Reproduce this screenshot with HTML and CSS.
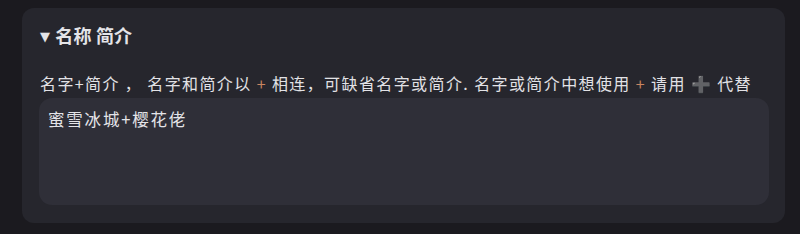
FILE: index.html
```html
<!DOCTYPE html>
<html lang="zh">
  <head>
    <meta charset="UTF-8" />
    <title>名称 简介</title>
    <link rel="stylesheet" href="styles.css">
  </head>
  <body>
    <details class="panel" open>
      <summary class="panel-title">名称 简介</summary>
      <p class="hint">
        名字+简介 ， 名字和简介以 <span class="plus">+</span> 相连，可缺省名字或简介. 名字或简介中想使用 <span class="plus">+</span> 请用 <span class="heavy-plus">➕</span> 代替
      </p>
      <textarea class="name-input" rows="4">蜜雪冰城+樱花佬</textarea>
    </details>
  </body>
</html>
```

FILE: styles.css
```css
body {
  background: #1b1a1f;
  color: #e6e6ea;
  font-family: "Noto Sans CJK SC", "Noto Sans", sans-serif;
  margin: 0;
  padding: 8px 15px 0 22px;
}
.panel {
  background: #26262d;
  border-radius: 12px;
  padding: 14px 17px 18px 18px;
}
.panel-title {
  font-size: 18px;
  font-weight: bold;
  letter-spacing: 0.2px;
  color: #e4e4e8;
  cursor: pointer;
  list-style: none;
  line-height: 26px;
}
.panel-title::before {
  content: "▼";
  font-family: "DejaVu Sans", sans-serif;
  font-size: 13px;
  margin-right: 5px;
  vertical-align: 2px;
}
.hint {
  font-size: 16px;
  letter-spacing: 1.4px;
  margin: 21px 0 1px 0;
  line-height: 24px;
  white-space: nowrap;
  color: #e2e2e6;
}
.plus {
  color: #c98560;
}
.heavy-plus {
  color: #45454d;
  font-family: "DejaVu Sans", sans-serif;
}
.name-input {
  display: block;
  box-sizing: border-box;
  width: 730px;
  height: 107px;
  margin-left: -1px;
  padding: 9px 9px;
  background: #2f2f38;
  border: none;
  border-radius: 13px;
  color: #e4e4e8;
  font-family: "Noto Sans CJK SC", sans-serif;
  font-size: 16.5px;
  letter-spacing: 1.8px;
  resize: none;
  outline: none;
}
```
